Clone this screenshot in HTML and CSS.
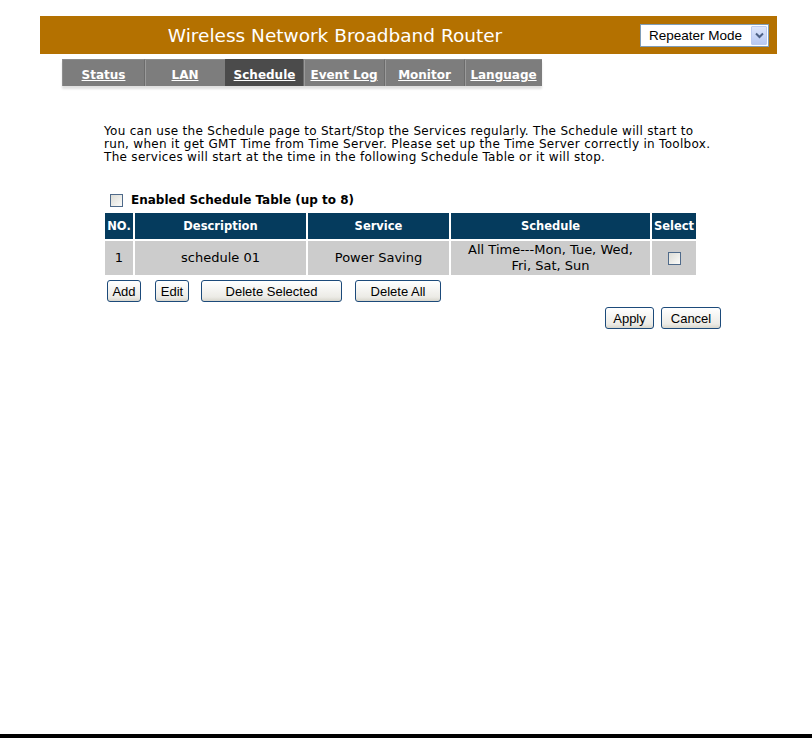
FILE: index.html
```html
<!DOCTYPE html>
<html lang="en">

<head>
  <meta charset="UTF-8">
  <title>Wireless Network Broadband Router</title>
  <link rel="stylesheet" href="styles.css">
</head>

<body>

  <div class="page">
    <!-- Top banner -->
    <div class="header">
      <div class="title">Wireless Network Broadband Router</div>
      <div class="mode-select">
        <span class="mode-text">Repeater Mode</span>
        <span class="mode-arrow">
          <svg width="9" height="7" viewBox="0 0 9 7"><path d="M1 1.5 L4.5 5 L8 1.5" fill="none" stroke="#4d6185" stroke-width="2"/></svg>
        </span>
      </div>
    </div>

    <!-- Menu tabs -->
    <div class="nav">
      <a class="tab tab-first" style="width: 82px">Status</a>
      <a class="tab" style="width: 81px">LAN</a>
      <a class="tab active" style="width: 78px">Schedule</a>
      <a class="tab" style="width: 81px">Event Log</a>
      <a class="tab" style="width: 80px">Monitor</a>
      <a class="tab" style="width: 78px">Language</a>
    </div>

    <div class="content">
      <p class="intro">
        You can use the Schedule page to Start/Stop the Services regularly. The Schedule will start to<br>
        run, when it get GMT Time from Time Server. Please set up the Time Server correctly in Toolbox.<br>
        The services will start at the time in the following Schedule Table or it will stop.
      </p>

      <div class="enable-row">
        <span class="check"></span>
        <span class="enable-label">Enabled Schedule Table (up to 8)</span>
      </div>

      <table class="sched-table">
        <tr>
          <th class="col-no">NO.</th>
          <th class="col-desc">Description</th>
          <th class="col-service">Service</th>
          <th class="col-sched">Schedule</th>
          <th class="col-select">Select</th>
        </tr>
        <tr>
          <td>1</td>
          <td>schedule 01</td>
          <td>Power Saving</td>
          <td>All Time---Mon, Tue, Wed,<br>Fri, Sat, Sun</td>
          <td><span class="check"></span></td>
        </tr>
      </table>

      <div class="table-buttons">
        <button class="btn btn-add">Add</button>
        <button class="btn btn-edit">Edit</button>
        <button class="btn btn-del-sel">Delete Selected</button>
        <button class="btn btn-del-all">Delete All</button>
      </div>

      <div class="form-buttons">
        <button class="btn btn-apply">Apply</button>
        <button class="btn btn-cancel">Cancel</button>
      </div>
    </div>
  </div>

</body>

</html>
```

FILE: styles.css
```css
html, body {
  margin: 0;
  padding: 0;
}

body {
  font-family: "DejaVu Sans", Verdana, sans-serif;
  background-color: #fff;
  color: #000;
  height: 738px;
  box-sizing: border-box;
  border-bottom: 4px solid #000;
}

.page {
  padding: 16px 0 0 40px;
}

/* banner */
.header {
  width: 737px;
  height: 38px;
  background-color: #b47100;
  display: flex;
  align-items: center;
}

.title {
  width: 590px;
  text-align: center;
  color: #fff;
  font-size: 18.5px;
}

.mode-select {
  margin-left: auto;
  margin-right: 8px;
  width: 129px;
  height: 23px;
  box-sizing: border-box;
  border: 1px solid #7f9db9;
  background-color: #fff;
  display: flex;
  align-items: center;
  padding: 0 1px 0 8px;
}

.mode-text {
  font-family: "Liberation Sans", Arial, sans-serif;
  font-size: 13.5px;
  flex: 1;
}

.mode-arrow {
  width: 16px;
  height: 19px;
  box-sizing: border-box;
  border: 1px solid #bccbf0;
  border-radius: 1px;
  background: linear-gradient(#dde6fb, #b8c9f3);
  display: flex;
  align-items: center;
  justify-content: center;
}

/* menu */
.nav {
  display: flex;
  margin: 5px 0 0 22px;
  height: 27px;
  width: 480px;
  background-color: #7d7d7d;
  box-shadow: 0 3px 2px rgba(0, 0, 0, 0.12);
}

.tab {
  box-sizing: border-box;
  height: 27px;
  line-height: 30px;
  text-align: center;
  color: #fff;
  font-size: 12px;
  font-weight: bold;
  text-decoration: underline;
  white-space: nowrap;
  border-left: 1px solid #6c6c6c;
  box-shadow: inset 1px 0 0 #9a9a9a;
  border-top: 1px solid #8c8c8c;
}

.tab-first {
  border-left: 1px solid #8f8f8f;
  box-shadow: none;
}

.tab.active {
  background-color: #4b4b4b;
  border-left-color: #4b4b4b;
  box-shadow: none;
  border-top-color: #444;
}

/* page body */
.content {
  margin-left: 64px;
}

.intro {
  margin: 39px 0 0 0;
  font-size: 12px;
  letter-spacing: 0.3px;
  line-height: 13px;
  white-space: nowrap;
}

.enable-row {
  display: flex;
  align-items: center;
  height: 14px;
  margin: 29px 0 0 6px;
}

.check {
  display: inline-block;
  width: 13px;
  height: 13px;
  box-sizing: border-box;
  border: 1px solid #4f6a8a;
  background: linear-gradient(135deg, #dcdcd6, #fbfbf9);
  vertical-align: middle;
}

.enable-label {
  margin-left: 8px;
  font-size: 12px;
  font-weight: bold;
}

.sched-table {
  margin: 4px 0 0 -1px;
  border-collapse: separate;
  border-spacing: 2px;
  table-layout: fixed;
}

.sched-table th {
  height: 26px;
  padding: 0;
  background-color: #053b5d;
  color: #fff;
  font-size: 11.5px;
  font-weight: bold;
  white-space: nowrap;
  text-align: center;
}

.sched-table td {
  height: 34px;
  padding: 0;
  background-color: #cccccc;
  font-size: 13px;
  line-height: 16px;
  text-align: center;
  white-space: nowrap;
}

.col-no { width: 28px; }
.col-desc { width: 171px; }
.col-service { width: 141px; }
.col-sched { width: 199px; }
.col-select { width: 44px; }

.table-buttons {
  display: flex;
  margin: 3px 0 0 3px;
}

.btn-add { width: 34px; margin-right: 14px; }
.btn-edit { width: 34px; margin-right: 12px; }
.btn-del-sel { width: 141px; margin-right: 13px; }
.btn-del-all { width: 86px; }

.form-buttons {
  display: flex;
  justify-content: flex-end;
  gap: 7px;
  width: 617px;
  margin-top: 5px;
}

.btn-apply { width: 49px; }
.btn-cancel { width: 60px; }

.btn {
  height: 22px;
  padding: 0;
  box-sizing: border-box;
  border: 1px solid #1c4a7a;
  border-radius: 3px;
  background: linear-gradient(#ffffff, #ecebe6 80%, #d8d6cc);
  font-family: "Liberation Sans", Arial, sans-serif;
  font-size: 13px;
  color: #000;
}
```
